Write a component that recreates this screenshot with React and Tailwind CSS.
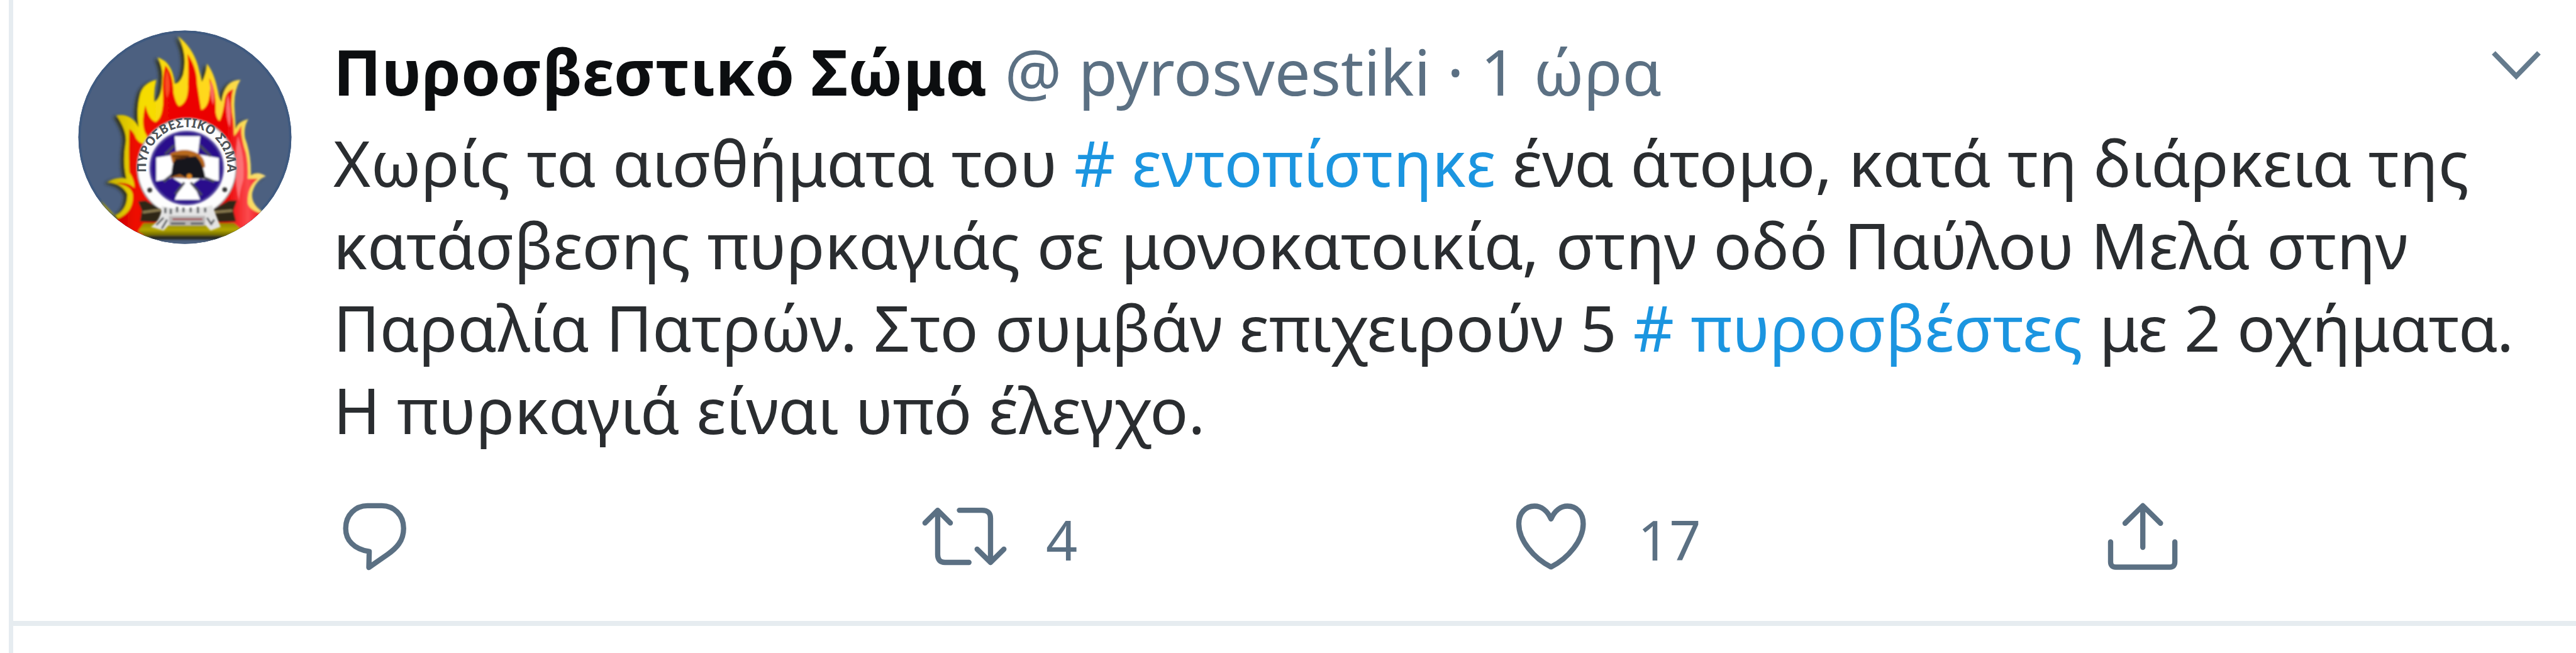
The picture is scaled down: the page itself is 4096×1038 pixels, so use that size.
function Avatar() {
  return (
    <svg viewBox="128 105 1180 1180" className="size-[340px] shrink-0" role="img" aria-label="Πυροσβεστικό Σώμα">
      <defs>
        <clipPath id="disc">
          <circle cx="718" cy="695" r="588" />
        </clipPath>
        <linearGradient id="edge" x1="0" x2="1">
          <stop offset="0" stopColor="#b9a400" />
          <stop offset="0.25" stopColor="#f5dc00" />
          <stop offset="0.65" stopColor="#ffd81e" />
          <stop offset="1" stopColor="#f6dc7a" />
        </linearGradient>
        <linearGradient id="core" x1="0" x2="1">
          <stop offset="0" stopColor="#c40000" />
          <stop offset="0.15" stopColor="#ee0a00" />
          <stop offset="0.75" stopColor="#ea0000" />
          <stop offset="0.9" stopColor="#fb4a4e" />
          <stop offset="1" stopColor="#ee1010" />
        </linearGradient>
        <linearGradient id="base" x1="0" y1="0" x2="0" y2="1">
          <stop offset="0" stopColor="#8f8400" />
          <stop offset="0.45" stopColor="#b5a800" />
          <stop offset="1" stopColor="#4a4400" />
        </linearGradient>
        <filter id="shade" x="-20%" y="-20%" width="140%" height="140%">
          <feGaussianBlur stdDeviation="9" />
        </filter>
        <filter id="soft" x="-10%" y="-10%" width="120%" height="120%">
          <feGaussianBlur stdDeviation="5" />
        </filter>
        <path
          id="flame"
          d="M250 1040 Q285 1100 330 1128 Q400 1100 400 1010 Q370 950 290 945 Q340 910 395 925 Q372 830 392 720 Q398 660 340 575 Q420 560 462 640 Q450 540 468 470 Q480 400 560 378 Q545 440 550 500 Q590 480 592 380 Q600 320 568 255 Q650 280 662 400 Q690 400 708 350 Q735 240 680 138 Q760 200 790 300 Q800 340 812 390 Q835 350 840 290 Q880 340 900 440 Q905 480 920 500 Q935 380 1025 378 Q985 440 992 540 L998 650 Q1010 610 1068 595 Q1040 640 1050 700 Q1085 790 1082 905 Q1120 880 1165 910 Q1110 930 1090 1000 Q1080 1060 1145 1105 L1000 1220 L420 1220 Z"
        />
      </defs>
      <g clipPath="url(#disc)">
        <circle cx="718" cy="695" r="590" fill="#4c6080" />
        <circle cx="718" cy="695" r="582" fill="none" stroke="#3f5a80" strokeWidth="14" />
        <g filter="url(#soft)">
          <use href="#flame" fill="#2c2a10" transform="translate(-16 8)" filter="url(#shade)" />
          <use href="#flame" fill="url(#edge)" />
          <path
            fill="url(#core)"
            d="M320 1155 Q440 1120 430 1010 Q420 960 340 950 Q400 940 440 975 Q440 930 412 890 Q405 800 412 650 Q440 670 448 700 Q470 735 500 730 L510 690 Q470 640 500 520 Q520 600 556 612 Q600 590 598 470 Q590 380 610 300 Q652 340 655 450 Q670 520 688 524 Q740 500 735 400 Q740 320 732 235 Q785 310 785 400 Q795 470 808 545 Q850 530 855 450 Q860 420 852 370 Q890 420 888 560 Q895 600 910 605 Q930 560 940 480 Q950 440 985 430 Q965 500 985 600 L990 690 Q1015 660 1030 630 Q1025 700 1055 780 Q1070 850 1065 925 L1120 925 Q1060 970 1065 1060 Q1075 1100 1150 1118 L1060 1240 L380 1240 Z"
          />
          <path d="M1010 690 Q1050 800 1040 930 Q1010 1030 1020 1060 Q980 900 1010 690Z" fill="#ff8c90" opacity="0.7" />
          <path d="M955 460 Q935 560 965 640 Q980 560 955 460Z" fill="#ff8a8a" opacity="0.8" />
          <path d="M860 380 Q885 430 875 520 Q850 450 860 380Z" fill="#ff8a7a" opacity="0.8" />
          <path d="M618 320 Q600 400 618 480 Q650 420 618 320Z" fill="#ff6a30" opacity="0.7" />
          <path d="M420 1255 H1020 L900 1330 H520 Z" fill="#4c6080" />
          <path d="M490 1170 H990 L1030 1205 L940 1250 H510 L460 1215 Z" fill="url(#base)" />
          <path d="M515 1240 H925 L900 1262 H540 Z" fill="#2a2a20" />
          <circle cx="728" cy="865" r="272" fill="#fdfdfd" stroke="#8b8b8b" strokeWidth="6" />
          <path d="M460 1050 L500 1045 L610 1105 L590 1165 L470 1160 L480 1100 Z" fill="#2e2718" />
          <path d="M1005 1045 L960 1045 L855 1105 L880 1165 L1000 1160 L985 1100 Z" fill="#2e2718" />
          <path d="M485 1110 L590 1095 M980 1100 L870 1110" stroke="#8a7a50" strokeWidth="14" />
        </g>
        <path id="motto" d="M510 915 A224 224 0 1 1 946 915" fill="none" />
        <text fontSize="70" fontWeight="700" fill="#50555a" fontFamily="'Noto Sans', sans-serif">
          <textPath href="#motto" startOffset="50%" textAnchor="middle">ΠΥΡΟΣΒΕΣΤΙΚΟ ΣΩΜΑ</textPath>
        </text>
        <g filter="url(#soft)">
          <circle cx="524" cy="987" r="13" fill="#303030" />
          <circle cx="938" cy="985" r="13" fill="#303030" />
          <circle cx="728" cy="865" r="200" fill="#2b108c" stroke="#55469f" strokeWidth="10" />
          <path d="M662 690 H802 L790 790 L905 810 V935 L800 925 L765 950 L802 1040 H662 L700 950 L650 920 L560 938 V808 L670 790 Z" fill="#fff" />
          <path d="M610 790 L660 740 M800 740 L860 800 M600 940 L650 900 M830 920 L880 940 M665 1010 L715 945 M750 945 L810 1015" stroke="#4a4a5a" strokeWidth="14" />
          <path d="M635 785 Q720 745 790 785 Q830 810 830 860 L790 880 L650 840 Z" fill="#b8691c" />
          <path d="M650 850 Q660 810 700 808 L780 800 Q820 840 832 925 L640 920 Z" fill="#17181c" />
          <path d="M632 918 L690 900 L735 925 L690 918 Z" fill="#a7601a" />
          <path d="M650 800 L740 800 M660 815 L720 808" stroke="#5c2e08" strokeWidth="10" />
          <circle cx="742" cy="912" r="15" fill="#e08a20" />
          <path d="M590 1075 Q728 1110 868 1070 L915 1190 L860 1210 L820 1170 L640 1170 L600 1210 L530 1190 Q590 1150 590 1075Z" fill="#e4e4e4" />
          <path d="M630 1130 H830 V1185 H630 Z" fill="#b9b6b6" />
          <path d="M610 1085 V1115 M640 1090 V1120 M675 1080 V1110 M710 1085 V1110 M750 1085 V1110 M790 1080 V1115 M830 1085 V1110" stroke="#606468" strokeWidth="13" />
          <path d="M650 1148 H815" stroke="#a04a50" strokeWidth="10" />
          <path d="M640 1172 H720 M750 1172 H820 M560 1180 L600 1140 M860 1180 L880 1150 M590 1200 L620 1150 M840 1140 L860 1170" stroke="#55585c" strokeWidth="11" />
        </g>
      </g>
    </svg>
  );
}

function Icon({ viewBox, children }) {
  return (
    <svg
      viewBox={viewBox}
      className="h-[120px] w-[140px] shrink-0 overflow-visible"
      fill="none"
      stroke="currentColor"
      strokeWidth="29"
      strokeLinecap="round"
      strokeLinejoin="round"
      aria-hidden="true"
    >
      {children}
    </svg>
  );
}

function Action({ label, count, className = "", children }) {
  return (
    <div className={className}>
      <button type="button" aria-label={label} className="flex items-center gap-14 text-[88px] leading-[100px]">
        {children}
        {count && <span>{count}</span>}
      </button>
    </div>
  );
}

function Hashtag({ children }) {
  return (
    <a href="#" className="text-[#1b95e0]">
      # {children}
    </a>
  );
}

export default function App() {
  return (
    <main className="ml-3.5 min-h-screen border-l-[7px] border-[#e6ecf0] bg-white font-['Noto_Sans',sans-serif] text-[101px] leading-[131px] text-[#2a2d30]">
      <article className="flex gap-[66px] border-b-8 border-[#e6ecf0] pt-12 pr-[55px] pb-[70px] pl-[103px]">
        <Avatar />
        <div className="min-w-0 flex-1">
          <header className="flex items-start justify-between">
            <div className="flex gap-7">
              <a href="#" className="font-bold text-[#0c0e10]">Πυροσβεστικό Σώμα</a>
              <span className="text-[#5b7083]">@ pyrosvestiki · 1 ώρα</span>
            </div>
            <button type="button" aria-label="Περισσότερα" className="pt-8 text-[#657b8d]">
              <svg viewBox="0 0 80 50" className="h-[50px] w-20" fill="none" stroke="currentColor" strokeWidth="8" aria-hidden="true">
                <path d="M4 4 L40 41 L76 4" />
              </svg>
            </button>
          </header>
          <p className="mt-3.5">
            Χωρίς τα αισθήματα του <Hashtag>εντοπίστηκε</Hashtag> ένα άτομο, κατά τη διάρκεια της κατάσβεσης πυρκαγιάς σε
            μονοκατοικία, στην οδό Παύλου Μελά στην Παραλία Πατρών. Στο συμβάν επιχειρούν 5{" "}
            <Hashtag>πυροσβέστες</Hashtag> με 2 οχήματα. Η πυρκαγιά είναι υπό έλεγχο.
          </p>
          <div className="mt-20 mr-[552px] -ml-1 flex text-[#5b7083]">
            <Action label="Απάντηση" className="flex-1">
              <Icon viewBox="23 71 486 417">
                <path d="M235 348 C150 335 105 285 105 220 C105 145 160 95 225 95 H305 C370 95 425 145 425 220 C425 290 385 330 335 365 L233 436 Z" />
              </Icon>
            </Action>
            <Action label="Retweet" count="4" className="flex-1">
              <Icon viewBox="47 71 486 417">
                <path d="M60 190 L130 120 L200 190 M130 120 V365 Q130 408 170 408 H303 M250 120 H375 Q422 120 422 165 V408 M348 335 L422 408 L496 335" />
              </Icon>
            </Action>
            <Action label="Μου αρέσει" count="17" className="flex-1">
              <Icon viewBox="44 71 486 417">
                <path d="M246 168 C225 120 190 97 155 97 C105 97 68 135 68 195 C68 285 150 385 246 433 C342 385 424 285 424 195 C424 135 387 97 337 97 C302 97 267 120 246 168 Z" />
              </Icon>
            </Action>
            <Action label="Κοινοποίηση">
              <Icon viewBox="68 71 486 417">
                <path d="M172 192 L270 95 L368 192 M270 95 V325 M92 295 V405 Q92 434 120 434 H420 Q447 434 447 405 V295" />
              </Icon>
            </Action>
          </div>
        </div>
      </article>
    </main>
  );
}
